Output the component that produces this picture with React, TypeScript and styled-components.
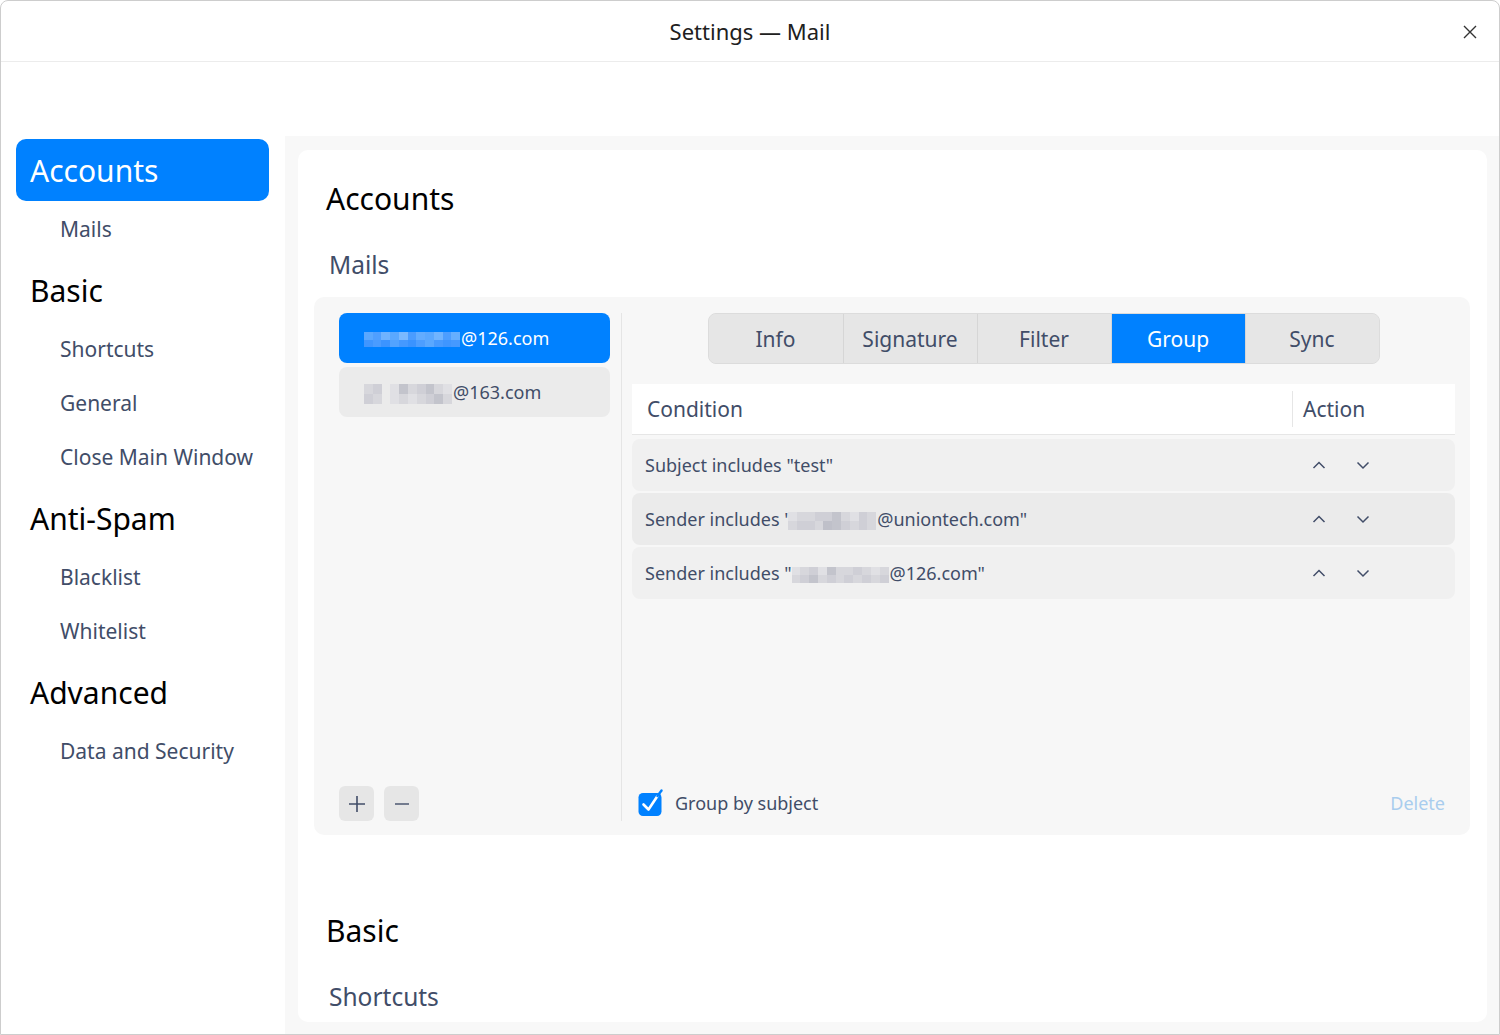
import React from "react";
import styled, { createGlobalStyle } from "styled-components";

const Global = createGlobalStyle`
  html, body { margin: 0; padding: 0; background: #ffffff; }
  body { font-family: "Noto Sans", "Open Sans", sans-serif; }
  * { box-sizing: border-box; }
`;

const Window = styled.div`
  width: 1500px;
  height: 1035px;
  border: 1px solid #cdcdcd;
  border-radius: 8px 8px 0 0;
  overflow: hidden;
  display: flex;
  flex-direction: column;
  background: #fff;
`;

const TitleBar = styled.div`
  height: 61px;
  flex: none;
  border-bottom: 1px solid #ececec;
  display: flex;
  align-items: center;
  justify-content: center;
  position: relative;
`;

const Title = styled.div`
  font-size: 22px;
  color: #202020;
`;

const CloseBtn = styled.div`
  position: absolute;
  right: 21px;
  top: 23px;
  width: 16px;
  height: 16px;
  display: flex;
`;

const Body = styled.div`
  flex: 1;
  display: flex;
  padding-top: 74px;
  min-height: 0;
`;

const Sidebar = styled.nav`
  width: 284px;
  flex: none;
  padding: 3px 16px 0 15px;
  display: flex;
  flex-direction: column;
`;

const NavGroup = styled.div<{ $active?: boolean }>`
  height: 62px;
  flex: none;
  display: flex;
  align-items: center;
  padding-left: 14px;
  margin: 3px 0 1px;
  font-size: 30px;
  color: ${(p) => (p.$active ? "#ffffff" : "#000000")};
  background: ${(p) => (p.$active ? "#0081ff" : "transparent")};
  border-radius: 10px;
  &:first-child { margin-top: 0; }
`;

const NavItem = styled.div`
  height: 54px;
  flex: none;
  display: flex;
  align-items: center;
  padding-left: 44px;
  font-size: 21px;
  color: #414d68;
`;

const Content = styled.main`
  flex: 1;
  background: #f8f8f8;
  padding: 14px 12px 0 13px;
  min-width: 0;
`;

const Card = styled.div`
  background: #ffffff;
  border-radius: 10px;
  height: 872px;
  padding: 29px 17px 0 16px;
  display: flex;
  flex-direction: column;
`;

const H1 = styled.div<{ $top?: number }>`
  font-size: 30px;
  line-height: 40px;
  color: #000;
  padding-left: 12px;
  margin-top: ${(p) => p.$top ?? 0}px;
`;

const H2 = styled.div<{ $top?: number }>`
  font-size: 24.5px;
  line-height: 34px;
  color: #414d68;
  padding-left: 15px;
  margin-top: ${(p) => p.$top ?? 0}px;
`;

const Panel = styled.div`
  margin-top: 15px;
  height: 538px;
  background: #f7f7f7;
  border-radius: 10px;
  padding: 16px 15px 14px 25px;
  display: flex;
`;

const AccountCol = styled.div`
  width: 271px;
  flex: none;
  display: flex;
  flex-direction: column;
  gap: 4px;
`;

const AccountItem = styled.div<{ $active?: boolean }>`
  height: 50px;
  border-radius: 8px;
  display: flex;
  align-items: center;
  padding-left: 25px;
  font-size: 18px;
  background: ${(p) => (p.$active ? "#0081ff" : "#ebebeb")};
  color: ${(p) => (p.$active ? "#ffffff" : "#414d68")};
`;

const Mosaic = styled.span<{ $cols: number; $h: number; $w: number }>`
  display: inline-grid;
  grid-template-columns: repeat(${(p) => p.$cols}, 1fr);
  width: ${(p) => p.$w}px;
  height: ${(p) => p.$h}px;
  margin-right: 1px;
  margin-top: 3px;
`;

const Cell = styled.span<{ $c: string }>`
  background: ${(p) => p.$c};
`;

const Spacer = styled.div`
  flex: 1;
`;

const BtnRow = styled.div`
  display: flex;
  gap: 10px;
`;

const SquareBtn = styled.div`
  width: 35px;
  height: 35px;
  border-radius: 6px;
  background: #e6e6e6;
  display: flex;
  align-items: center;
  justify-content: center;
`;

const Divider = styled.div`
  width: 1px;
  background: #e5e5e5;
  margin: 0 10px 0 11px;
  flex: none;
`;

const RightCol = styled.div`
  flex: 1;
  display: flex;
  flex-direction: column;
  min-width: 0;
`;

const Tabs = styled.div`
  align-self: center;
  display: flex;
  height: 51px;
  border: 1px solid #dcdcdc;
  border-radius: 8px;
  overflow: hidden;
  background: #e6e6e6;
`;

const Tab = styled.div<{ $active?: boolean; $first?: boolean }>`
  width: 134px;
  display: flex;
  align-items: center;
  justify-content: center;
  font-size: 21px;
  color: ${(p) => (p.$active ? "#ffffff" : "#414d68")};
  background: ${(p) => (p.$active ? "#0081ff" : "#e6e6e6")};
  border-left: ${(p) => (p.$first ? "none" : "1px solid #d6d6d6")};
`;

const TableHead = styled.div`
  margin-top: 20px;
  height: 51px;
  background: #ffffff;
  border-bottom: 1px solid #e6e6e6;
  display: flex;
  align-items: center;
  font-size: 21px;
  color: #414d68;
`;

const HeadCell = styled.div<{ $w?: number }>`
  display: flex;
  align-items: center;
  padding-left: ${(p) => (p.$w ? 10 : 15)}px;
  flex: ${(p) => (p.$w ? `0 0 ${p.$w}px` : "1")};
  border-left: ${(p) => (p.$w ? "1px solid #e6e6e6" : "none")};
  height: 36px;
`;

const Rows = styled.div`
  margin-top: 4px;
  display: flex;
  flex-direction: column;
  gap: 2px;
`;

const Row = styled.div<{ $hover?: boolean }>`
  height: 52px;
  border-radius: 8px;
  background: ${(p) => (p.$hover ? "#ebebeb" : "#f0f0f0")};
  display: flex;
  align-items: center;
  padding-left: 13px;
  font-size: 18px;
  color: #414d68;
`;

const RowText = styled.div`
  flex: 1;
  display: flex;
  align-items: center;
  white-space: nowrap;
`;

const Arrows = styled.div`
  flex: 0 0 163px;
  display: flex;
  gap: 30px;
  padding-left: 20px;
`;

const Footer = styled.div`
  height: 36px;
  display: flex;
  align-items: center;
  padding: 0 10px 0 6px;
`;

const CheckLabel = styled.div`
  font-size: 18px;
  color: #414d68;
  margin-left: 11px;
  flex: 1;
`;

const DeleteLink = styled.div`
  font-size: 18px;
  color: #a9cdee;
`;

const Chevron = ({ up }: { up?: boolean }) => (
  <svg width="14" height="10" viewBox="0 0 14 10">
    <polyline
      points={up ? "1.5,8 7,2.5 12.5,8" : "1.5,2.5 7,8 12.5,2.5"}
      fill="none"
      stroke="#414d68"
      strokeWidth="1.5"
    />
  </svg>
);

const blueA = ["#5aa8ff", "#4f9fff", "#6fb3ff", "#5aa8ff", "#7ab9ff", "#4a9cff", "#62acff", "#5aa8ff", "#70b4ff", "#4d9eff", "#66afff"];
const blueB = ["#3f96ff", "#4a9cff", "#3c94ff", "#52a3ff", "#4599ff", "#3a93ff", "#4d9eff", "#5aa8ff", "#489bff", "#3f96ff", "#4599ff"];

const Mos = ({ rows, h, w }: { rows: string[][]; h: number; w: number }) => (
  <Mosaic $cols={rows[0].length} $h={h} $w={w}>
    {rows.flat().map((c, i) => (
      <Cell key={i} $c={c} />
    ))}
  </Mosaic>
);

const g1 = "#cfcfd6", g2 = "#d7d7dc", g3 = "#c3c4cc", g4 = "#e0e0e4", g5 = "#ebebeb", g6 = "#bfc0c9";

export default function App() {
  return (
    <>
      <Global />
      <Window>
        <TitleBar>
          <Title>Settings — Mail</Title>
          <CloseBtn>
            <svg width="16" height="16" viewBox="0 0 16 16">
              <path d="M2 2 L14 14 M14 2 L2 14" stroke="#333" strokeWidth="1.4" fill="none" />
            </svg>
          </CloseBtn>
        </TitleBar>
        <Body>
          <Sidebar>
            <NavGroup $active>Accounts</NavGroup>
            <NavItem>Mails</NavItem>
            <NavGroup>Basic</NavGroup>
            <NavItem>Shortcuts</NavItem>
            <NavItem>General</NavItem>
            <NavItem>Close Main Window</NavItem>
            <NavGroup>Anti-Spam</NavGroup>
            <NavItem>Blacklist</NavItem>
            <NavItem>Whitelist</NavItem>
            <NavGroup>Advanced</NavGroup>
            <NavItem>Data and Security</NavItem>
          </Sidebar>
          <Content>
            <Card>
              <H1>Accounts</H1>
              <H2 $top={29}>Mails</H2>
              <Panel>
                <AccountCol>
                  <AccountItem $active>
                    <Mos rows={[blueA, blueB]} h={15} w={96} />
                    @126.com
                  </AccountItem>
                  <AccountItem>
                    <Mos
                      rows={[
                        [g2, g1, g5, g4, g3, g2, g1, g3, g2, g4],
                        [g1, g2, g5, g4, g2, g4, g2, g1, g3, g2],
                      ]}
                      h={20}
                      w={88}
                    />
                    @163.com
                  </AccountItem>
                  <Spacer />
                  <BtnRow>
                    <SquareBtn>
                      <svg width="18" height="18" viewBox="0 0 18 18">
                        <path d="M9 1 V17 M1 9 H17" stroke="#414d68" strokeWidth="1.6" />
                      </svg>
                    </SquareBtn>
                    <SquareBtn>
                      <svg width="18" height="18" viewBox="0 0 18 18">
                        <path d="M2 9 H16" stroke="#414d68" strokeWidth="1.4" />
                      </svg>
                    </SquareBtn>
                  </BtnRow>
                </AccountCol>
                <Divider />
                <RightCol>
                  <Tabs>
                    <Tab $first>Info</Tab>
                    <Tab>Signature</Tab>
                    <Tab>Filter</Tab>
                    <Tab $active>Group</Tab>
                    <Tab>Sync</Tab>
                  </Tabs>
                  <TableHead>
                    <HeadCell>Condition</HeadCell>
                    <HeadCell $w={163}>Action</HeadCell>
                  </TableHead>
                  <Rows>
                    <Row>
                      <RowText>Subject includes "test"</RowText>
                      <Arrows>
                        <Chevron up />
                        <Chevron />
                      </Arrows>
                    </Row>
                    <Row $hover>
                      <RowText>
                        Sender includes '
                        <Mos
                          rows={[
                            [g4, g2, g2, g1, g1, g3, g2, g4, g1, g2],
                            [g2, g1, g1, g2, g6, g3, g1, g2, g1, g2],
                          ]}
                          h={18}
                          w={88}
                        />
                        @uniontech.com"
                      </RowText>
                      <Arrows>
                        <Chevron up />
                        <Chevron />
                      </Arrows>
                    </Row>
                    <Row>
                      <RowText>
                        Sender includes "
                        <Mos
                          rows={[
                            [g4, g2, g1, g4, g3, g2, g2, g1, g2, g4, g2],
                            [g2, g1, g3, g2, g1, g2, g1, g2, g1, g2, g1],
                          ]}
                          h={16}
                          w={97}
                        />
                        @126.com"
                      </RowText>
                      <Arrows>
                        <Chevron up />
                        <Chevron />
                      </Arrows>
                    </Row>
                  </Rows>
                  <Spacer />
                  <Footer>
                    <svg width="26" height="28" viewBox="0 0 26 28">
                      <rect x="0.5" y="4" width="23" height="23" rx="4.5" fill="#0081ff" />
                      <path d="M5.5 15.5 L10.5 20.5 L19.5 7" stroke="#ffffff" strokeWidth="2.6" fill="none" strokeLinecap="round" strokeLinejoin="round" />
                      <path d="M19.5 7 L23.5 1.5" stroke="#0081ff" strokeWidth="2.4" fill="none" strokeLinecap="round" />
                    </svg>
                    <CheckLabel>Group by subject</CheckLabel>
                    <DeleteLink>Delete</DeleteLink>
                  </Footer>
                </RightCol>
              </Panel>
              <H1 $top={76}>Basic</H1>
              <H2 $top={29}>Shortcuts</H2>
            </Card>
          </Content>
        </Body>
      </Window>
    </>
  );
}
